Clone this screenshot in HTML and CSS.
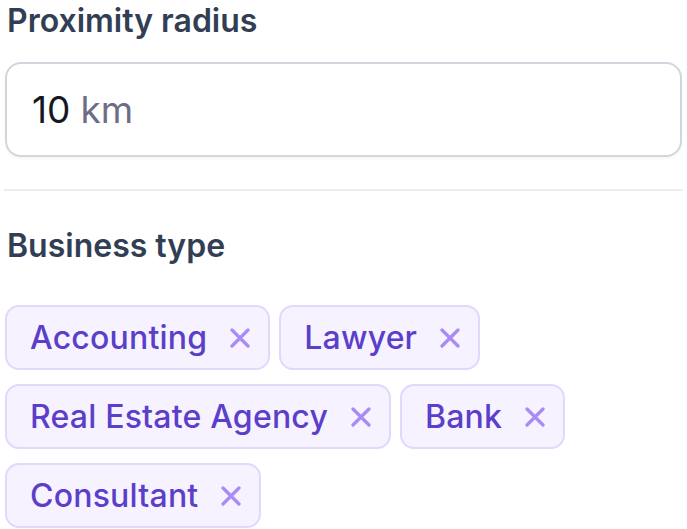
FILE: index.html
```html
<!DOCTYPE html>
<html lang="en">
<head>
    <meta charset="UTF-8">
    <meta name="viewport" content="width=device-width, initial-scale=1.0">
    <title>Filters</title>
    <link rel="stylesheet" href="styles.css">
</head>
<body>
    <div class="filters">
        <div class="field-label">Proximity radius</div>
        <div class="radius-input">
            <span class="radius-value">10</span>
            <span class="radius-unit">km</span>
        </div>

        <hr class="divider">

        <div class="field-label">Business type</div>
        <div class="chips">
            <span class="chip">Accounting
                <svg class="chip-x" viewBox="0 0 20 20"><path d="M2 2L18 18M18 2L2 18"/></svg>
            </span>
            <span class="chip">Lawyer
                <svg class="chip-x" viewBox="0 0 20 20"><path d="M2 2L18 18M18 2L2 18"/></svg>
            </span>
            <span class="chip">Real Estate Agency
                <svg class="chip-x" viewBox="0 0 20 20"><path d="M2 2L18 18M18 2L2 18"/></svg>
            </span>
            <span class="chip">Bank
                <svg class="chip-x" viewBox="0 0 20 20"><path d="M2 2L18 18M18 2L2 18"/></svg>
            </span>
            <span class="chip">Consultant
                <svg class="chip-x" viewBox="0 0 20 20"><path d="M2 2L18 18M18 2L2 18"/></svg>
            </span>
        </div>
    </div>
</body>
</html>
```

FILE: styles.css
```css
body {
    margin: 0;
    font-family: 'Inter', 'Noto Sans', sans-serif;
    background-color: #fff;
}
.filters {
    padding: 1px 5px 0 5px;
    width: 677px;
}
.field-label {
    font-size: 32px;
    font-weight: 600;
    color: #323e54;
    line-height: 40px;
    padding-left: 2px;
}
.radius-input {
    margin-top: 21px;
    height: 95px;
    box-sizing: border-box;
    border: 2px solid #d3d5dc;
    border-radius: 16px;
    padding-left: 25px;
    display: flex;
    align-items: center;
    font-size: 37px;
    box-shadow: 0 2px 3px rgba(0, 0, 0, 0.04);
}
.radius-value {
    color: #151823;
}
.radius-unit {
    color: #6e6d88;
    margin-left: 10px;
}
.divider {
    border: none;
    border-top: 2px solid #ececef;
    margin: 32px -1px 35px -1px;
}
.chips {
    margin-top: 39px;
    display: flex;
    flex-wrap: wrap;
    gap: 14px 9px;
}
.chip {
    display: inline-flex;
    align-items: center;
    height: 65px;
    box-sizing: border-box;
    padding: 0 18px 0 23px;
    background-color: #f7f2ff;
    border: 2px solid #e4d7fc;
    border-radius: 14px;
    color: #5b3fc9;
    font-size: 32px;
    font-weight: 500;
    letter-spacing: 0.2px;
}
.chip-x {
    width: 20px;
    height: 20px;
    margin-left: 23px;
    fill: none;
    stroke: #a98bf5;
    stroke-width: 3.2;
    stroke-linecap: round;
}
```
